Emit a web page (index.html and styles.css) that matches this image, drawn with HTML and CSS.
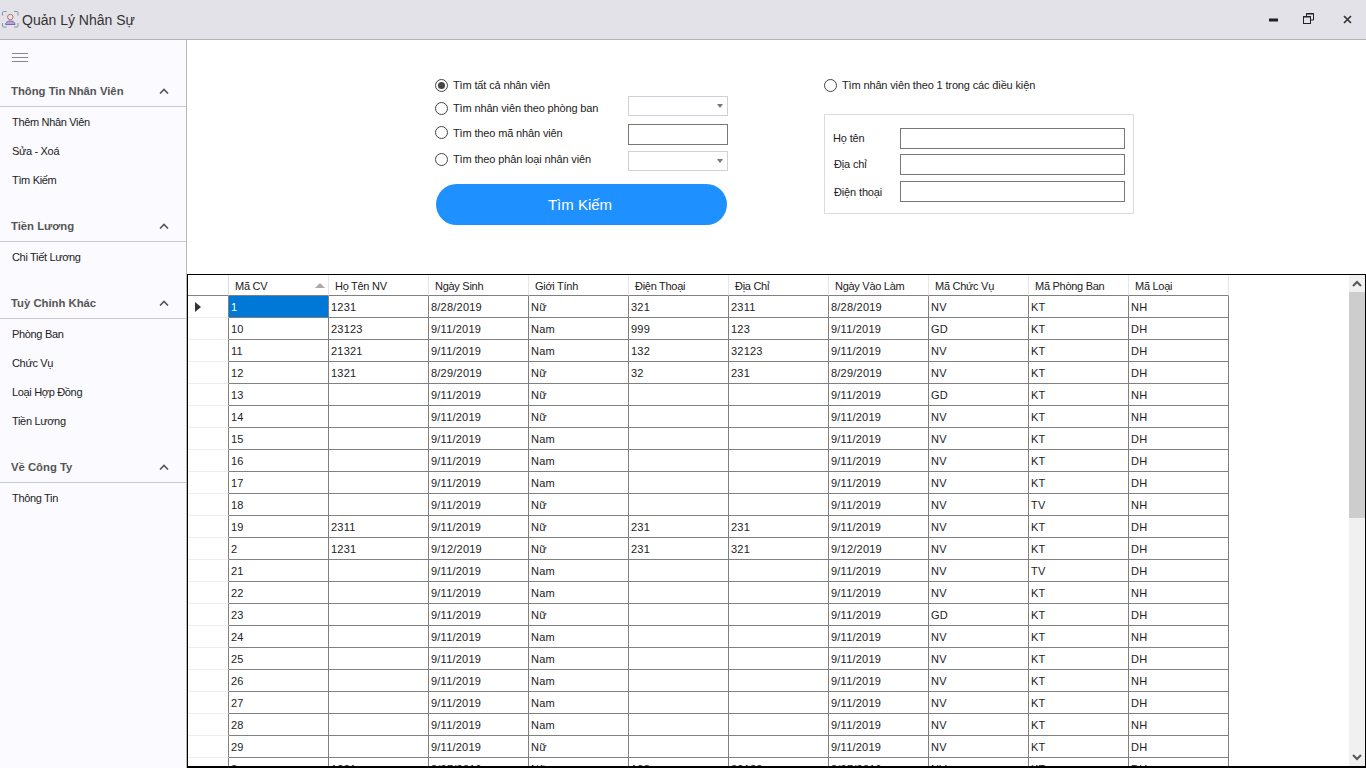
FILE: index.html
```html
<!DOCTYPE html>
<html lang="vi">
<head>
<meta charset="utf-8">
<title>Quản Lý Nhân Sự</title>
<link rel="stylesheet" href="styles.css">
</head>
<body>
<div class="app">
  <header class="titlebar">
    <svg class="logo" width="17" height="17" viewBox="0 0 17 17" fill="none"><path d="M.5 4.500V1.500Q.5 .5 1.500 .5H4.500M12 .5H15Q16 .5 16 1.500V4.500M16 12V15Q16 16 15 16H12M4.500 16H1.500Q.5 16 .5 15V12" stroke="#7f93b0"/><circle cx="8.300" cy="6" r="2.700" stroke="#a8756e" fill="#f3e6e6"/><path d="M3.500 13.500C3.800 10.800 6 10 8.300 10S12.800 10.800 13.100 13.500Z" fill="#b3a4d4" stroke="#7e6aa6"/></svg>
    <span class="app-title">Quản Lý Nhân Sự</span>
    <div class="winctl">
      <svg class="ctl-min" width="10" height="4" viewBox="0 0 10 4"><rect width="9" height="3" y="0.500" fill="#222"/></svg>
      <svg class="ctl-max" width="11" height="11" viewBox="0 0 11 11" fill="none" stroke="#222"><path d="M3.500 3V.5H10.500V7H8" stroke-width="1"/><rect x="0.500" y="3.500" width="7" height="7" stroke-width="1"/><path d="M0 4H8M3 1H11" stroke-width="1"/></svg>
      <svg class="ctl-close" width="9" height="9" viewBox="0 0 9 9" stroke="#333" stroke-width="1.700"><path d="M1 1L8 8M8 1L1 8"/></svg>
    </div>
  </header>
  <div class="body">
    <nav class="sidebar">
      <div class="burger"><i></i><i></i><i></i></div>
      <section class="group g1">
        <h3 class="group-h"><span>Thông Tin Nhân Viên</span><svg class="chev" width="10" height="6" viewBox="0 0 10 6" fill="none" stroke="#555" stroke-width="1.600"><path d="M1 5.500L5 1.500L9 5.500"/></svg></h3>
        <a>Thêm Nhân Viên</a><a>Sửa - Xoá</a><a>Tìm Kiếm</a>
      </section>
      <section class="group g2">
        <h3 class="group-h"><span>Tiền Lương</span><svg class="chev" width="10" height="6" viewBox="0 0 10 6" fill="none" stroke="#555" stroke-width="1.600"><path d="M1 5.500L5 1.500L9 5.500"/></svg></h3>
        <a>Chi Tiết Lương</a>
      </section>
      <section class="group g3">
        <h3 class="group-h"><span>Tuỳ Chỉnh Khác</span><svg class="chev" width="10" height="6" viewBox="0 0 10 6" fill="none" stroke="#555" stroke-width="1.600"><path d="M1 5.500L5 1.500L9 5.500"/></svg></h3>
        <a>Phòng Ban</a><a>Chức Vụ</a><a>Loại Hợp Đồng</a><a>Tiền Lương</a>
      </section>
      <section class="group g4">
        <h3 class="group-h"><span>Về Công Ty</span><svg class="chev" width="10" height="6" viewBox="0 0 10 6" fill="none" stroke="#555" stroke-width="1.600"><path d="M1 5.500L5 1.500L9 5.500"/></svg></h3>
        <a>Thông Tin</a>
      </section>
    </nav>
    <main class="main">
      <div class="search">
        <div class="col-a">
          <div class="opt o1"><span class="radio on"></span><span>Tìm tất cả nhân viên</span></div>
          <div class="opt o2"><span class="radio"></span><span class="lbl">Tìm nhân viên theo phòng ban</span><span class="combo"><b></b></span></div>
          <div class="opt o3"><span class="radio"></span><span class="lbl">Tìm theo mã nhân viên</span><span class="text"></span></div>
          <div class="opt o4"><span class="radio"></span><span class="lbl">Tìm theo phân loại nhân viên</span><span class="combo"><b></b></span></div>
          <button class="go">Tìm Kiếm</button>
        </div>
        <div class="col-b">
          <div class="opt"><span class="radio"></span><span>Tìm nhân viên theo 1 trong các điều kiện</span></div>
          <div class="cond">
            <div class="cond-row"><span>Họ tên</span><span class="text wide"></span></div>
            <div class="cond-row"><span class="in1">Địa chỉ</span><span class="text wide"></span></div>
            <div class="cond-row"><span class="in1">Điện thoại</span><span class="text wide"></span></div>
          </div>
        </div>
      </div>
      <div class="gridwrap">
        <div class="grid">
          <div class="gr head"><div class="rh"></div><div class="hc sorted">Mã CV<i class="sort"></i></div><div class="hc">Họ Tên NV</div><div class="hc">Ngày Sinh</div><div class="hc">Giới Tính</div><div class="hc">Điện Thoại</div><div class="hc">Địa Chỉ</div><div class="hc">Ngày Vào Làm</div><div class="hc">Mã Chức Vụ</div><div class="hc">Mã Phòng Ban</div><div class="hc">Mã Loại</div></div>
          <div id="rows"></div>
        </div>
        <div class="scroll">
          <svg class="arrow" width="10" height="7" viewBox="0 0 10 7" fill="none" stroke="#555" stroke-width="2"><path d="M1 6L5 2L9 6"/></svg>
          <div class="thumb"></div>
          <svg class="arrow" width="10" height="7" viewBox="0 0 10 7" fill="none" stroke="#555" stroke-width="2"><path d="M1 1L5 5L9 1"/></svg>
        </div>
      </div>
    </main>
  </div>
</div>
<script src="rows.js"></script>
</body>
</html>
```

FILE: rows.js
```js
var d = "9/11/2019";
var data = [
["1","1231","8/28/2019","Nữ","321","2311","8/28/2019","NV","KT","NH"],
["10","23123",d,"Nam","999","123",d,"GD","KT","DH"],
["11","21321",d,"Nam","132","32123",d,"NV","KT","DH"],
["12","1321","8/29/2019","Nữ","32","231","8/29/2019","NV","KT","DH"],
["13","",d,"Nữ","","",d,"GD","KT","NH"],
["14","",d,"Nữ","","",d,"NV","KT","NH"],
["15","",d,"Nam","","",d,"NV","KT","DH"],
["16","",d,"Nam","","",d,"NV","KT","DH"],
["17","",d,"Nam","","",d,"NV","KT","DH"],
["18","",d,"Nữ","","",d,"NV","TV","NH"],
["19","2311",d,"Nữ","231","231",d,"NV","KT","DH"],
["2","1231","9/12/2019","Nữ","231","321","9/12/2019","NV","KT","DH"],
["21","",d,"Nam","","",d,"NV","TV","DH"],
["22","",d,"Nam","","",d,"NV","KT","NH"],
["23","",d,"Nữ","","",d,"GD","KT","DH"],
["24","",d,"Nam","","",d,"NV","KT","NH"],
["25","",d,"Nam","","",d,"NV","KT","DH"],
["26","",d,"Nam","","",d,"NV","KT","NH"],
["27","",d,"Nam","","",d,"NV","KT","DH"],
["28","",d,"Nam","","",d,"NV","KT","NH"],
["29","",d,"Nữ","","",d,"NV","KT","DH"],
["3","1231","8/27/2019","Nữ","123","32123","8/27/2019","NV","KT","DH"]
];
var html = "";
data.forEach(function (r, i) {
  html += '<div class="gr"><div class="rh">' + (i === 0 ? '<i class="cur"></i>' : '') + '</div>';
  r.forEach(function (c, j) {
    html += '<div class="c' + (i === 0 && j === 0 ? ' sel' : '') + '">' + c + '</div>';
  });
  html += '</div>';
});
document.getElementById("rows").innerHTML = html;
```

FILE: styles.css
```css
* { box-sizing: border-box; }
html, body { margin: 0; height: 100%; overflow: hidden; }
body { font-family: "Liberation Sans", Arial, sans-serif; font-size: 11px; color: #222; background: #fff; }
.app { width: 1366px; height: 768px; display: flex; flex-direction: column; overflow: hidden; }
.titlebar { height: 40px; flex: none; background: #e3e2e8; border-bottom: 1px solid #b3b2ba; display: flex; align-items: center; padding-left: 2px; }
.logo { margin-right: 3px; }
.app-title { font-size: 14px; color: #333; }
.winctl { margin-left: auto; display: flex; align-items: center; padding-right: 14px; }
.ctl-min { margin-right: 24px; }
.ctl-max { margin-right: 29px; margin-top: -2px; }
.ctl-close { margin-top: -1px; }
.body { flex: 1; display: flex; min-height: 0; }
.sidebar { width: 187px; flex: none; background: #fbfaff; border-right: 1px solid #b9b8c0; }
.burger { height: 36px; padding: 13px 0 0 12px; }
.burger i { display: block; width: 16px; height: 1px; background: #888; margin-bottom: 3px; }
.group-h { margin: 0; height: 31px; display: flex; align-items: center; justify-content: space-between; padding: 0 17px 0 11px; font-size: 11.3px; font-weight: 700; color: #555; border-bottom: 1px solid #c8c8d0; }
.group a { display: flex; align-items: center; height: 29px; padding: 0 0 2px 12px; color: #222; letter-spacing: -.33px; }
.group a:first-of-type { margin-top: 1px; }
.g2, .g3, .g4 { margin-top: 16px; }
.main { flex: 1; min-width: 0; display: flex; flex-direction: column; }
.search { height: 234px; flex: none; display: flex; padding: 34px 0 0 248px; letter-spacing: -.14px; }
.col-a { width: 292px; flex: none; }
.col-b { margin-left: 97px; width: 310px; }
.opt { display: flex; align-items: center; height: 22px; }
.o2 { height: 22px; margin-top: 1px; }
.o3 { height: 21px; margin-top: 3px; }
.o4 { height: 20px; margin-top: 6px; }
.o2 .combo { margin-top: -4px; }
.o3 .text, .o4 .combo { margin-top: 4px; }
.radio { width: 13px; height: 13px; border: 1px solid #444; border-radius: 50%; background: #fff; margin-right: 5px; flex: none; display: flex; align-items: center; justify-content: center; }
.radio.on::after { content: ""; width: 7px; height: 7px; border-radius: 50%; background: #444; }
.lbl { width: 175px; flex: none; }
.combo { width: 100px; height: 20px; flex: none; background: #fff; border: 1px solid #d0cfdc; display: flex; align-items: center; justify-content: flex-end; padding-right: 3px; }
.combo b { width: 0; height: 0; border-left: 3px solid transparent; border-right: 3px solid transparent; border-top: 4px solid #777; margin-right: 1px; }
.text { width: 100px; height: 21px; border: 1px solid #777; background: #fff; flex: none; display: block; }
.go { display: block; margin: 15px 0 0 1px; width: 291px; height: 41px; padding: 0 3px 0 0; border: 0; border-radius: 21px; background: #1e90ff; color: #fff; font: 500 15px "Liberation Sans", Arial, sans-serif; }
.cond { margin-top: 18px; width: 310px; height: 100px; border: 1px solid #dcdcdc; padding: 13px 8px 0 8px; display: flex; flex-direction: column; gap: 5px; }
.cond-row { display: flex; align-items: center; height: 21px; }
.cond-row:last-child { margin-top: 1px; }
.cond-row span:first-child { width: 67px; flex: none; padding-bottom: 2px; }
.cond-row:last-child span:first-child { padding-bottom: 0; }
.cond-row .in1 { padding-left: 1px; }
.text.wide { width: 225px; }
.gridwrap { flex: 1; min-height: 0; border: 1px solid #000; border-width: 1px 1px 2px 1px; display: flex; position: relative; background: #fff; overflow: hidden; }
.grid { flex: 1; min-width: 0; overflow: hidden; }
.gr { display: flex; height: 22px; }
.gr.head { height: 21px; }
.rh { width: 41px; flex: none; border-right: 1px solid #808080; border-bottom: 1px solid #eee; display: flex; align-items: center; justify-content: center; }
.head .rh { border-right-color: #ddd; border-bottom: 1px solid #808080; }
.hc { width: 100px; flex: none; padding: 5px 0 0 6px; border-right: 1px solid #e6e6e6; border-bottom: 1px solid #808080; position: relative; color: #222; letter-spacing: -.28px; }
.sort { position: absolute; right: 3px; top: 8px; width: 0; height: 0; border-left: 5px solid transparent; border-right: 5px solid transparent; border-bottom: 5px solid #aaa; }
.c { width: 100px; flex: none; padding: 5px 0 0 2px; border-right: 1px solid #808080; border-bottom: 1px solid #808080; white-space: nowrap; overflow: hidden; color: #222; letter-spacing: .22px; }
.c.sel { background: #0078d7; color: #fff; }
.cur { width: 0; height: 0; border-top: 5px solid transparent; border-bottom: 5px solid transparent; border-left: 6px solid #333; margin-left: -21px; margin-top: 1px; }
.scroll { width: 16px; flex: none; background: #f0f0f0; display: flex; flex-direction: column; align-items: center; position: relative; }
.arrow { flex: none; margin: 5px 0; }
.thumb { width: 100%; height: 226px; background: #cdcdcd; margin-bottom: auto; }
```
